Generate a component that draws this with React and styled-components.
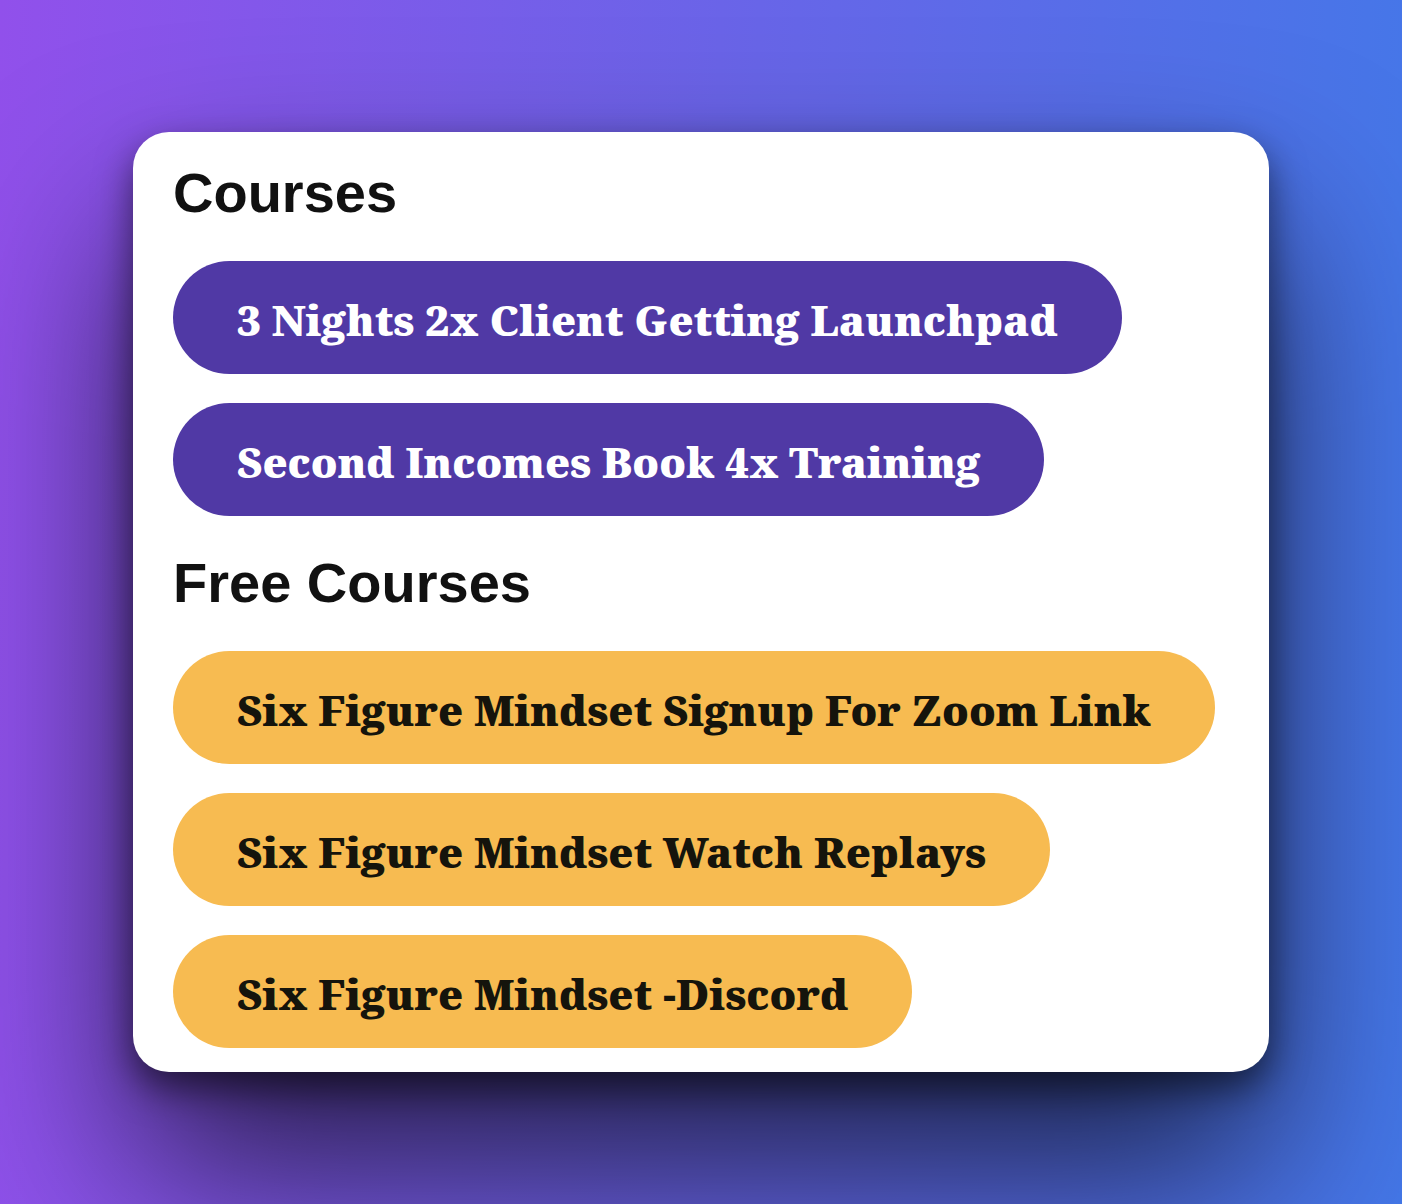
import React from 'react'
import styled, { createGlobalStyle } from 'styled-components';

const GlobalStyle = createGlobalStyle`
    * {
        box-sizing: border-box;
    }

    body {
        margin: 0;
    }
`

const Page = styled.div`
    min-height: 100vh;
    padding: 132px 133px;
    overflow: hidden;
    background: linear-gradient(92deg, #9150eb 0%, #6a64e8 50%, #4477e8 100%);
`

const Card = styled.main`
    padding: 24px 40px;
    border-radius: 36px;
    background: #ffffff;
    box-shadow: 0 100px 180px rgba(0, 0, 0, 0.68), 0 16px 36px rgba(0, 0, 0, 0.55);
`

const Section = styled.section`
    display: flex;
    flex-direction: column;
    align-items: flex-start;
    gap: 29px;

    & + & {
        margin-top: 30px;
    }
`

const Title = styled.h2`
    margin: 0;
    padding-bottom: 3px;
    color: #111111;
    font-family: 'Liberation Sans', Arial, sans-serif;
    font-size: 56px;
    font-weight: 700;
    line-height: 73px;
`

const CourseButton = styled.button`
    padding: 4px 64px 0;
    min-height: 113px;
    border: 0;
    border-radius: 57px;
    background: ${props => props.$free ? '#f7bb51' : '#5039a5'};
    color: ${props => props.$free ? '#15140c' : '#ffffff'};
    font-family: 'Noto Serif', 'DejaVu Serif', 'Liberation Serif', serif;
    font-size: 42px;
    font-weight: 900;
    line-height: 54px;
    text-align: left;
    cursor: pointer;
`

const courses = [
    '3 Nights 2x Client Getting Launchpad',
    'Second Incomes Book 4x Training',
]

const freeCourses = [
    'Six Figure Mindset Signup For Zoom Link',
    'Six Figure Mindset Watch Replays',
    'Six Figure Mindset -Discord',
]

const App = () => {
  return (
    <Page>
        <GlobalStyle />
        <Card>
            <Section>
                <Title>Courses</Title>
                {courses.map(name => (
                    <CourseButton key={name} type='button'>{name}</CourseButton>
                ))}
            </Section>
            <Section>
                <Title>Free Courses</Title>
                {freeCourses.map(name => (
                    <CourseButton key={name} type='button' $free>{name}</CourseButton>
                ))}
            </Section>
        </Card>
    </Page>
  )
}

export default App;
